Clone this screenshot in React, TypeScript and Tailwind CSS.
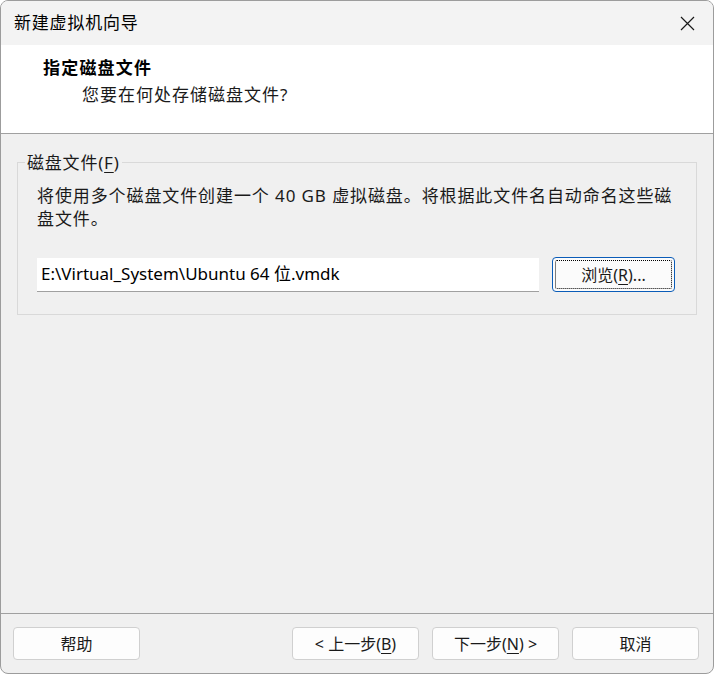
import React from 'react';

const font = { fontFamily: '"Noto Sans", "Noto Sans CJK SC", sans-serif' };

const DialogButton = ({ children }: { children: React.ReactNode }) => (
  <button className="w-[127px] h-[33px] rounded-[4px] border border-[#d0d0d0] bg-[#fdfdfd] text-[16px] text-[#1a1a1a] flex items-center justify-center">
    {children}
  </button>
);

export default function App() {
  return (
    <div className="w-[714px] h-[674px] bg-white" style={font}>
      <div className="w-full h-full flex flex-col rounded-[8px] border border-[#9c9c9c] overflow-hidden bg-[#f0f0f0]">
        {/* Title bar */}
        <div className="h-[44px] bg-[#f3f3f3] flex items-center justify-between pl-[13px]">
          <span className="text-[17px] tracking-[0.8px] text-black">新建虚拟机向导</span>
          <div className="w-[48px] h-full flex items-center justify-center mr-[2px]">
            <svg width="15" height="15" viewBox="0 0 15 15">
              <path d="M1 1 L14 14 M14 1 L1 14" stroke="#1a1a1a" strokeWidth="1.2" />
            </svg>
          </div>
        </div>

        {/* Header */}
        <div className="h-[89px] bg-white border-b border-[#a0a0a0]">
          <div className="pl-[42px] pt-[11px] text-[17px] font-bold tracking-[1.2px] text-black leading-[24px]">
            指定磁盘文件
          </div>
          <div className="pl-[81px] pt-[3px] text-[17px] tracking-[1px] text-[#1a1a1a] leading-[24px]">
            您要在何处存储磁盘文件?
          </div>
        </div>

        {/* Body */}
        <div className="flex-1 flex flex-col">
          <div className="flex-1 px-[16px] pt-[17px]">
            <fieldset className="border border-[#d9d9d9] px-0 pb-[22px] pt-[10px]">
              <legend className="ml-[7px] px-[2px] text-[17px] tracking-[0.8px] text-[#1a1a1a] leading-[23px]">
                磁盘文件(<span className="underline underline-offset-[3px]">F</span>)
              </legend>
              <div className="pl-[19px] pr-[21px]">
                <p className="text-[17px] tracking-[0.9px] leading-[23px] text-[#1a1a1a]">
                  将使用多个磁盘文件创建一个 40 GB 虚拟磁盘。将根据此文件名自动命名这些磁盘文件。
                </p>
                <div className="flex items-center justify-between mt-[27px]">
                  <div className="w-[502px] h-[34px] bg-white border-b border-[#a0a0a0] flex items-center pl-[4px] text-[17px] text-black">
                    E:\Virtual_System\Ubuntu 64 位.vmdk
                  </div>
                  <button className="w-[123px] h-[35px] rounded-[4px] border border-[#0a5cb8] bg-[#fbfbfb] p-[2px]">
                    <div className="w-full h-full border border-dotted border-black rounded-[2px] flex items-center justify-center text-[16px] text-[#1a1a1a]">
                      浏览(<span className="underline underline-offset-[3px]">R</span>)...
                    </div>
                  </button>
                </div>
              </div>
            </fieldset>
          </div>

          {/* Footer */}
          <div className="h-[60px] border-t border-[#a0a0a0] flex items-start pt-[13px] pl-[12px] pr-[14px]">
            <DialogButton>帮助</DialogButton>
            <div className="flex-1" />
            <div className="flex gap-[13px]">
              <DialogButton>
                &lt; 上一步(<span className="underline underline-offset-[3px]">B</span>)
              </DialogButton>
              <DialogButton>
                下一步(<span className="underline underline-offset-[3px]">N</span>) &gt;
              </DialogButton>
              <DialogButton>取消</DialogButton>
            </div>
          </div>
        </div>
      </div>
    </div>
  );
}
